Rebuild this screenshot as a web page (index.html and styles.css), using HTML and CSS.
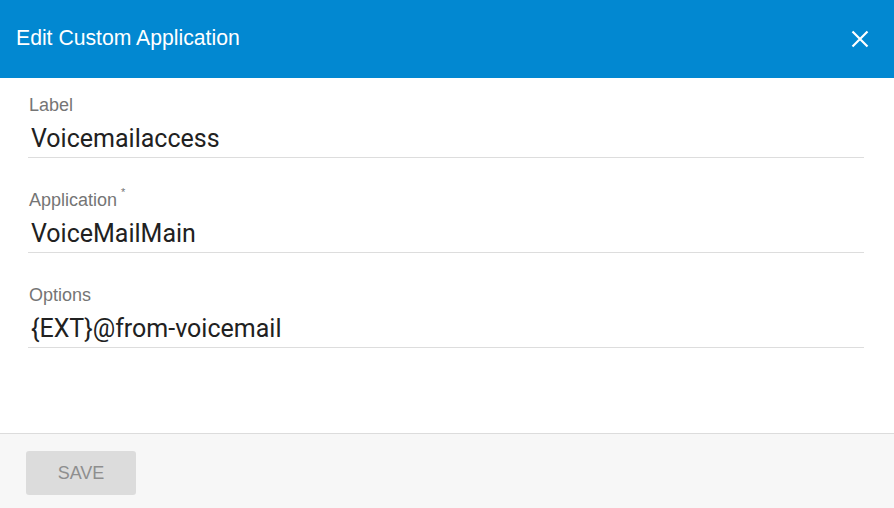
FILE: index.html
```html
<!DOCTYPE html>
<html lang="en">
<head>
  <meta charset="UTF-8" />
  <meta name="viewport" content="width=device-width, initial-scale=1.0" />
  <title>Edit Custom Application</title>
  <link rel="stylesheet" href="styles.css">
</head>
<body>
  <div class="dialog">
    <header class="dialog-header">
      <h2 class="dialog-title">Edit Custom Application</h2>
      <button class="close-btn" type="button" aria-label="Close">
        <svg width="18" height="18" viewBox="0 0 18 18">
          <path d="M1.5 1.5 L16.5 16.5 M16.5 1.5 L1.5 16.5" stroke="#fff" stroke-width="2.2" fill="none" />
        </svg>
      </button>
    </header>

    <form class="dialog-body" id="appForm">
      <div class="field">
        <label for="label">Label</label>
        <input type="text" id="label" value="Voicemailaccess" />
      </div>

      <div class="field">
        <label for="application">Application<span class="req">*</span></label>
        <input type="text" id="application" value="VoiceMailMain" required />
      </div>

      <div class="field">
        <label for="options">Options</label>
        <input type="text" id="options" value="{EXT}@from-voicemail" />
      </div>
    </form>

    <footer class="dialog-footer">
      <button class="save-btn" type="submit" form="appForm" disabled>SAVE</button>
    </footer>
  </div>
</body>
</html>
```

FILE: styles.css
```css
html, body {
  margin: 0;
  height: 100%;
}
body {
  font-family: "Liberation Sans", Arial, sans-serif;
  background: #fff;
}
.dialog {
  display: flex;
  flex-direction: column;
  height: 100vh;
}
.dialog-header {
  height: 78px;
  flex-shrink: 0;
  background-color: #0288d1;
  display: flex;
  align-items: center;
  justify-content: space-between;
  padding: 0 25px 0 16px;
  box-sizing: border-box;
}
.dialog-title {
  margin: 0 0 3px;
  font-weight: normal;
  font-size: 21.2px;
  color: #fff;
}
.close-btn {
  background: none;
  border: none;
  padding: 0;
  width: 18px;
  height: 18px;
  cursor: pointer;
  display: flex;
}
.dialog-body {
  flex: 1;
  margin: 0;
  padding: 16px 30px 0 28px;
  display: flex;
  flex-direction: column;
  gap: 31px;
}
.field {
  border-bottom: 1px solid #dddddd;
}
.field label {
  display: block;
  padding-left: 1px;
  font-size: 18px;
  line-height: 22px;
  height: 22px;
  color: #757575;
}
.req {
  position: relative;
  top: -10px;
  font-size: 11px;
  line-height: 0;
  margin-left: 4px;
}
.field input {
  display: block;
  width: 100%;
  box-sizing: border-box;
  border: none;
  outline: none;
  padding: 4px 3px 0;
  height: 41px;
  font-family: Roboto, "Liberation Sans", sans-serif;
  font-size: 25px;
  color: #212121;
  background: transparent;
}
.dialog-footer {
  flex-shrink: 0;
  height: 75px;
  box-sizing: border-box;
  border-top: 1px solid #dcdcdc;
  background-color: #f7f7f7;
  padding: 17px 26px;
}
.save-btn {
  width: 110px;
  height: 44px;
  border: none;
  border-radius: 3px;
  background-color: #dcdcdc;
  color: #8e8e8e;
  font-family: "Liberation Sans", Arial, sans-serif;
  font-size: 18px;
}
```
